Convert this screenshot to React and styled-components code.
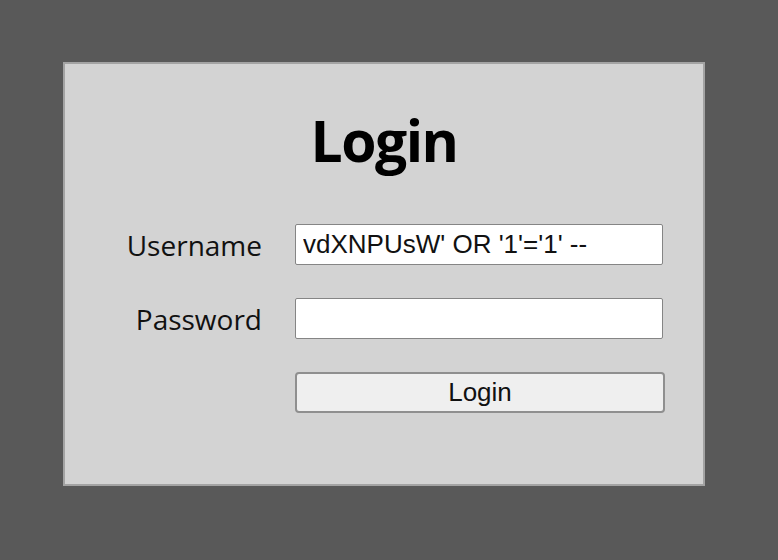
import React from "react"
import styled, { createGlobalStyle } from "styled-components"

const GlobalStyle = createGlobalStyle`
  html, body {
    margin: 0;
    padding: 0;
    background: #595959;
  }
`

const Page = styled.div`
  min-height: 560px;
  padding: 62px 0 0 63px;
  box-sizing: border-box;
`

const Card = styled.div`
  width: 642px;
  height: 424px;
  box-sizing: border-box;
  background: #d3d3d3;
  border: 2px solid #a3a3a3;
  display: flex;
  flex-direction: column;
`

const Title = styled.h1`
  margin: 40px 0 0;
  text-align: center;
  font-family: "Open Sans", sans-serif;
  font-weight: 700;
  font-size: 57px;
  line-height: 72px;
  color: #000;
  letter-spacing: -1.5px;
`

const Form = styled.form`
  display: grid;
  grid-template-columns: 1fr 370px;
  column-gap: 33px;
  row-gap: 33px;
  align-items: center;
  margin-top: 48px;
  padding-right: 38px;
`

const Label = styled.label`
  text-align: right;
  font-family: "Open Sans", sans-serif;
  font-size: 28px;
  color: #111;
`

const Input = styled.input`
  width: 368px;
  height: 41px;
  box-sizing: border-box;
  margin: 0;
  padding: 0 7px;
  background: #fff;
  border: 1px solid #858585;
  border-radius: 2px;
  font-family: "Liberation Sans", Arial, sans-serif;
  font-size: 26px;
  color: #111;
  outline: none;
`

const Button = styled.button`
  grid-column: 2;
  width: 370px;
  height: 41px;
  box-sizing: border-box;
  margin: 0;
  background: #efefef;
  border: 2px solid #8f8f8f;
  border-radius: 4px;
  font-family: "Liberation Sans", Arial, sans-serif;
  font-size: 26px;
  color: #111;
`

const App = () => {
  return (
    <>
      <GlobalStyle />
      <Page>
        <Card>
          <Title>Login</Title>
          <Form onSubmit={(e) => e.preventDefault()}>
            <Label htmlFor="username">Username</Label>
            <Input
              id="username"
              type="text"
              defaultValue="vdXNPUsW' OR '1'='1' --"
            />
            <Label htmlFor="password">Password</Label>
            <Input id="password" type="password" />
            <Button type="submit">Login</Button>
          </Form>
        </Card>
      </Page>
    </>
  )
}

export default App
